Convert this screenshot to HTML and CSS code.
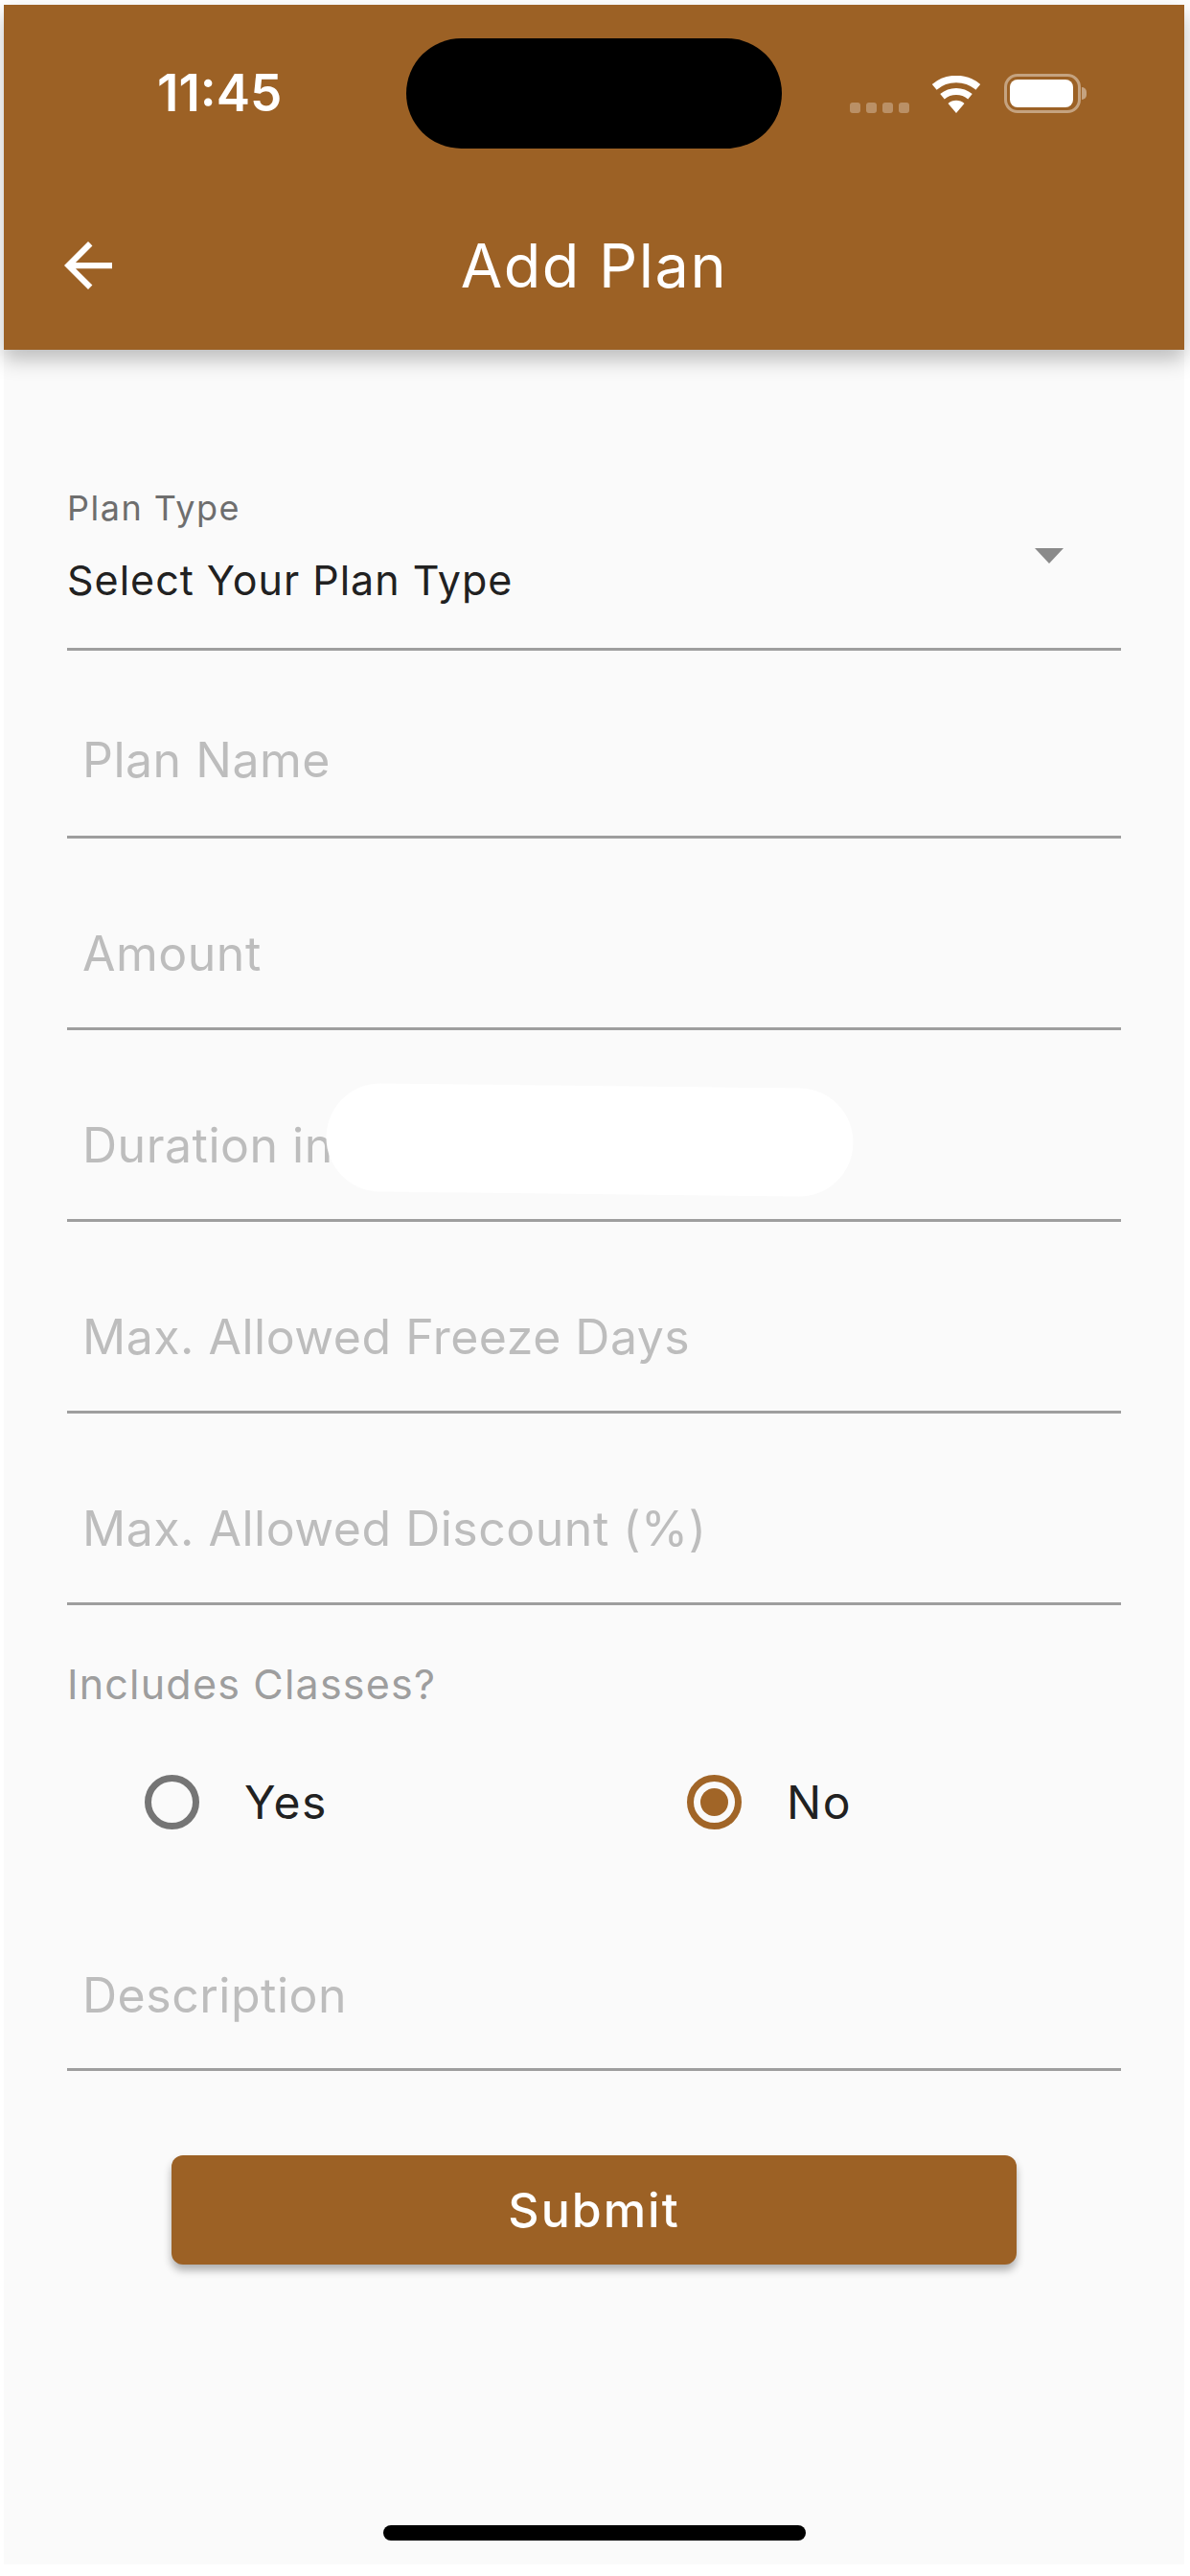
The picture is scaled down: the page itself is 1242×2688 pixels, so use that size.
FILE: index.html
```html
<!DOCTYPE html>
<html lang="en">

<head>
    <meta charset="UTF-8">
    <meta name="viewport" content="width=device-width, initial-scale=1.0">
    <title>Add Plan</title>

    <link rel="stylesheet" href="styles.css">
</head>

<body>

    <div class="screen">

        <header class="header">
            <div class="statusbar">
                <div class="time">11:45</div>
                <div class="island"></div>
                <div class="status-icons">
                    <div class="dots">
                        <span class="dot"></span>
                        <span class="dot"></span>
                        <span class="dot"></span>
                        <span class="dot"></span>
                    </div>
                    <svg class="wifi" viewBox="0 0 52 39">
                        <path d="M3.2 11.8A35.5 35.5 0 0 1 48.8 11.8" fill="none" stroke="#fff" stroke-width="7.5" />
                        <path d="M11.5 21.8A22.5 22.5 0 0 1 40.5 21.8" fill="none" stroke="#fff" stroke-width="7" />
                        <path d="M26 39L17.5 29A13 13 0 0 1 34.5 29Z" fill="#fff" />
                    </svg>
                    <div class="battery">
                        <div class="battery-body">
                            <div class="battery-fill"></div>
                        </div>
                        <div class="battery-nub"></div>
                    </div>
                </div>
            </div>

            <div class="appbar">
                <svg class="back" viewBox="4 4 16 16">
                    <path d="M20 11H7.83l5.59-5.59L12 4l-8 8 8 8 1.41-1.41L7.83 13H20v-2z" fill="#fff" />
                </svg>
                <h1 class="title">Add Plan</h1>
            </div>
        </header>

        <main class="form">

            <div class="dropdown">
                <div>
                    <div class="dropdown-label">Plan Type</div>
                    <div class="dropdown-value">Select Your Plan Type</div>
                </div>
                <div class="caret"></div>
            </div>

            <div class="field first">Plan Name</div>
            <div class="field">Amount</div>
            <div class="field">
                Duration in Days
                <svg class="blot" viewBox="0 0 551 119">
                    <path d="M57 57L494 62" fill="none" stroke="#fff" stroke-width="113" stroke-linecap="round" />
                </svg>
            </div>
            <div class="field">Max. Allowed Freeze Days</div>
            <div class="field">Max. Allowed Discount (%)</div>

            <div class="group-label">Includes Classes?</div>
            <div class="radios">
                <div class="radio-item">
                    <span class="radio"></span>
                    <span class="radio-text">Yes</span>
                </div>
                <div class="radio-item">
                    <span class="radio checked"></span>
                    <span class="radio-text">No</span>
                </div>
            </div>

            <div class="field description">Description</div>

            <button class="submit">Submit</button>
        </main>

        <div class="homebar"></div>
    </div>

</body>

</html>
```

FILE: styles.css
```css
* {
    box-sizing: border-box;
}

body {
    margin: 0;
    height: 2688px;
    padding: 5px 6px 12px 4px;
    background-color: #fff;
    font-family: "Inter", "Liberation Sans", sans-serif;
    overflow: hidden;
}

.screen {
    display: flex;
    flex-direction: column;
    height: 100%;
    background-color: #fafafa;
}

/* top brown part */
.header {
    height: 360px;
    background-color: #9c6125;
    box-shadow: 0 10px 20px rgba(0, 0, 0, 0.25);
}

.statusbar {
    display: grid;
    grid-template-columns: 420px 392px 1fr;
    align-items: center;
    padding-top: 35px;
}

.time {
    padding: 0 0 2px 160px;
    color: #fff;
    font-size: 53px;
    font-weight: 600;
    line-height: 60px;
}

.island {
    height: 115px;
    border-radius: 58px;
    background-color: #000;
}

.status-icons {
    display: flex;
    justify-content: flex-end;
    align-items: flex-end;
    padding-right: 102px;
}

.dots {
    display: flex;
    gap: 6px;
    margin-right: 23px;
}

.dot {
    width: 11px;
    height: 11px;
    border-radius: 3px;
    background-color: rgba(255, 255, 255, 0.3);
}

.wifi {
    width: 52px;
    height: 39px;
    margin-right: 24px;
}

.battery {
    display: flex;
    align-items: center;
}

.battery-body {
    width: 80px;
    height: 41px;
    padding: 3px 5px 3px 3px;
    border: 3px solid rgba(255, 255, 255, 0.42);
    border-radius: 14px;
}

.battery-fill {
    height: 100%;
    border-radius: 8px;
    background-color: #fff;
}

.battery-nub {
    width: 5px;
    height: 13px;
    margin-left: 1px;
    border-radius: 0 6px 6px 0;
    background-color: rgba(255, 255, 255, 0.42);
}

.appbar {
    display: flex;
    align-items: center;
    height: 176px;
    margin-top: 34px;
    padding-left: 63px;
}

.back {
    width: 50px;
    height: 50px;
}

.title {
    flex: 1;
    margin: 0;
    padding-right: 113px;
    color: #fff;
    font-size: 63px;
    font-weight: 400;
    letter-spacing: 1.5px;
    text-align: center;
}

/* form */
.form {
    padding: 143px 66px 0;
}

.dropdown {
    display: flex;
    justify-content: space-between;
    padding-bottom: 41px;
    border-bottom: 3px solid #9e9e9e;
}

.dropdown-label {
    margin-bottom: 23px;
    color: #6e6e6e;
    font-size: 36px;
    letter-spacing: 1.5px;
    line-height: 44px;
}

.dropdown-value {
    color: #212121;
    font-size: 43px;
    letter-spacing: 1px;
    line-height: 60px;
}

.caret {
    width: 0;
    height: 0;
    margin: 64px 60px 0 0;
    border-top: 16px solid #8a8a8a;
    border-left: 15px solid transparent;
    border-right: 15px solid transparent;
}

.field {
    position: relative;
    margin-top: 80px;
    padding: 0 0 37px 16px;
    border-bottom: 3px solid #9e9e9e;
    color: #bdbdbd;
    font-size: 50px;
    letter-spacing: 0.5px;
    line-height: 80px;
}

.field.first {
    margin-top: 74px;
    padding-bottom: 39px;
}

.blot {
    position: absolute;
    left: 270px;
    top: -25px;
    width: 551px;
    height: 119px;
}

.group-label {
    margin-top: 57px;
    color: #9e9e9e;
    font-size: 43px;
    letter-spacing: 1.2px;
    line-height: 50px;
}

.radios {
    display: grid;
    grid-template-columns: 566px 1fr;
    margin-top: 70px;
    padding-left: 81px;
}

.radio-item {
    display: flex;
    align-items: center;
    gap: 47px;
}

.radio {
    display: flex;
    justify-content: center;
    align-items: center;
    width: 57px;
    height: 57px;
    border: 7px solid #757575;
    border-radius: 50%;
}

.radio.checked {
    border-color: #a16527;
}

.radio.checked::after {
    content: "";
    width: 29px;
    height: 29px;
    border-radius: 50%;
    background-color: #a16527;
}

.radio-text {
    color: #212121;
    font-size: 48px;
    letter-spacing: 1.5px;
    line-height: 57px;
}

.field.description {
    margin-top: 133px;
    padding-bottom: 36px;
}

.submit {
    display: block;
    width: 882px;
    height: 114px;
    margin: 88px auto 0;
    border: 0;
    border-radius: 12px;
    background-color: #9c6125;
    box-shadow: 0 6px 9px rgba(0, 0, 0, 0.3);
    color: #fff;
    font-family: inherit;
    font-size: 50px;
    font-weight: 500;
    letter-spacing: 2px;
}

.homebar {
    align-self: center;
    width: 441px;
    height: 16px;
    margin-top: auto;
    margin-bottom: 25px;
    border-radius: 8px;
    background-color: #000;
}
```
